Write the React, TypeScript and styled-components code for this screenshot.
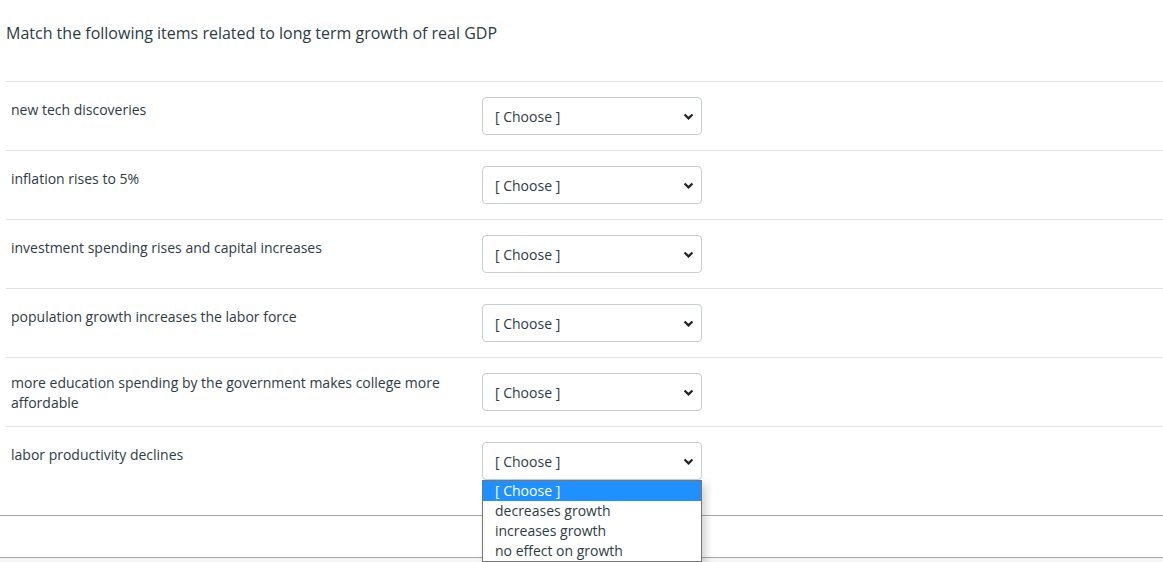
import { FunctionComponent } from 'react';
import styled, { createGlobalStyle } from 'styled-components';

const GlobalStyle = createGlobalStyle`
  html, body {
    margin: 0;
    padding: 0;
    background: #f5f5f5;
    font-family: 'Open Sans', 'Liberation Sans', sans-serif;
    color: #2d3b45;
  }
`;

const Page = styled.div`
  background: #fff;
  width: 100%;
`;

const Question = styled.div`
  padding-left: 6px;
`;

const Title = styled.div`
  font-size: 16px;
  line-height: 24px;
  padding: 21px 0 36px 0;
  margin: 0;
`;

const Row = styled.div`
  display: flex;
  border-top: 1px solid #e0e2e4;
  height: 69px;
  box-sizing: border-box;

  &:last-child {
    height: 89px;
  }
`;

const Label = styled.div<{ $wrapped?: boolean }>`
  width: 476px;
  box-sizing: border-box;
  padding: ${p => (p.$wrapped ? '15px' : '18px')} 30px 0 5px;
  font-size: 14px;
  line-height: 20px;
`;

const SelectWrap = styled.div`
  position: relative;
  margin-top: 15px;
  width: 220px;
  height: 38px;
`;

const SelectBox = styled.div`
  display: flex;
  align-items: center;
  justify-content: space-between;
  box-sizing: border-box;
  width: 100%;
  height: 100%;
  padding: 0 7px 0 12px;
  border: 1px solid #c7cdd1;
  border-radius: 4px;
  background: #fff;
  font-size: 14px;
  color: #2d3b45;
`;

const Chevron = styled.svg`
  width: 11px;
  height: 11px;
`;

const OptionList = styled.ul`
  position: absolute;
  top: 100%;
  left: 0;
  width: 100%;
  box-sizing: border-box;
  margin: 0;
  padding: 0;
  list-style: none;
  background: #fff;
  border: 1px solid #767676;
  box-shadow: 4px 4px 8px rgba(0, 0, 0, 0.18);
  z-index: 2;
`;

const Option = styled.li<{ $active?: boolean }>`
  padding-left: 12px;
  font-size: 14px;
  line-height: 20px;
  height: 20px;
  background: ${p => (p.$active ? '#1e90ff' : '#fff')};
  color: ${p => (p.$active ? '#fff' : '#2d3b45')};
`;

const Footer = styled.div`
  border-top: 1px solid #a5a5a5;
  border-bottom: 1px solid #a5a5a5;
  height: 41px;
  background: #fff;
`;

const Bottom = styled.div`
  height: 10px;
  background: #f5f5f5;
`;

const items = [
  'new tech discoveries',
  'inflation rises to 5%',
  'investment spending rises and capital increases',
  'population growth increases the labor force',
  'more education spending by the government makes college more affordable',
  'labor productivity declines',
];

const options = ['[ Choose ]', 'decreases growth', 'increases growth', 'no effect on growth'];

const App: FunctionComponent = () => {
  return (
    <>
      <GlobalStyle />
      <Page>
        <Question>
          <Title>Match the following items related to long term growth of real GDP</Title>
          {items.map((item, index) => (
            <Row key={index}>
              <Label $wrapped={item.length > 60}>{item}</Label>
              <SelectWrap>
                <SelectBox>
                  <span>[ Choose ]</span>
                  <Chevron viewBox='0 0 10 10'>
                    <path d='M1.4 3.2 L5 6.7 L8.6 3.2' fill='none' stroke='#222' strokeWidth='2' />
                  </Chevron>
                </SelectBox>
                {index === items.length - 1 && (
                  <OptionList>
                    {options.map((option, i) => (
                      <Option key={option} $active={i === 0}>
                        {option}
                      </Option>
                    ))}
                  </OptionList>
                )}
              </SelectWrap>
            </Row>
          ))}
        </Question>
        <Footer />
      </Page>
      <Bottom />
    </>
  );
};

export default App;
